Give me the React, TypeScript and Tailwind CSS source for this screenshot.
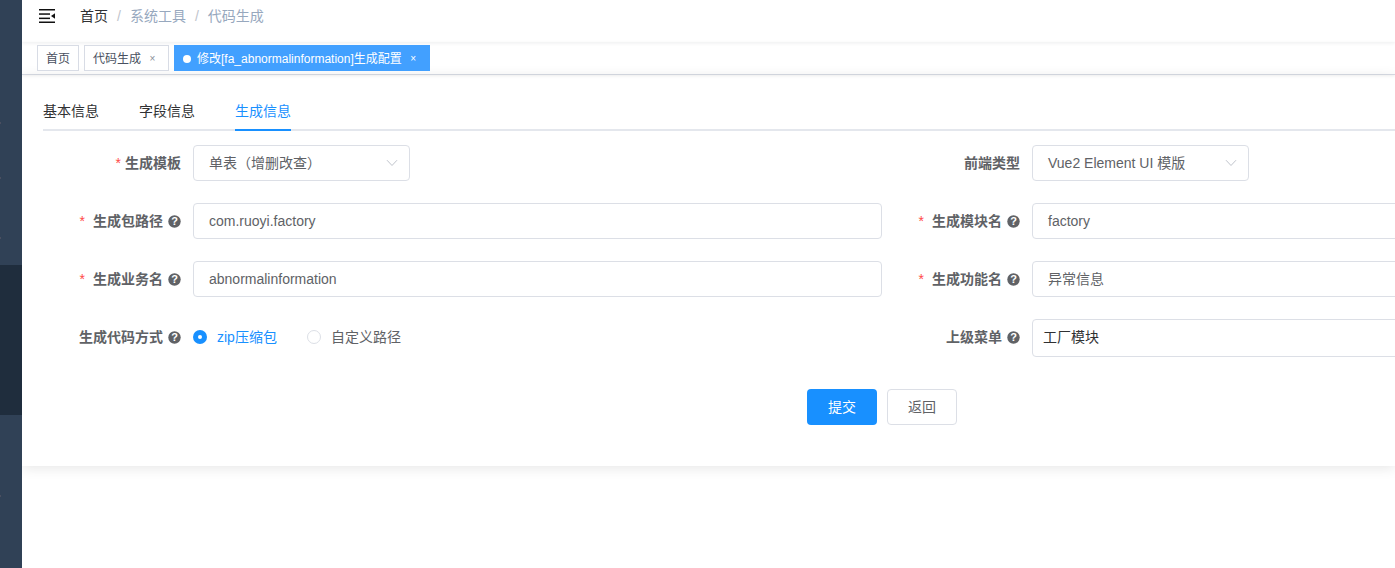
const font = { fontFamily: '"Liberation Sans", "Noto Sans CJK SC", sans-serif' };

function Help() {
  return (
    <svg viewBox="0 0 13 13" className="ml-[5px] h-[13px] w-[13px] shrink-0">
      <circle cx="6.5" cy="6.5" r="6.2" fill="#606266" />
      <text x="6.5" y="10.4" textAnchor="middle" fontSize="11" fontWeight="700" fill="#fff" fontFamily="Liberation Sans">?</text>
    </svg>
  );
}

function Chevron() {
  return (
    <svg viewBox="0 0 12 8" className="h-[8px] w-[12px]" fill="none" stroke="#c0c4cc" strokeWidth="1">
      <path d="M1 1.2l5 5.3 5-5.3" />
    </svg>
  );
}

function Label({ text, req, help, lift }: { text: string; req?: boolean; help?: boolean; lift?: boolean }) {
  return (
    <label className={`flex w-[150px] shrink-0 items-center justify-end pr-3 text-sm font-bold text-[#606266] ${lift ? "pb-[2px]" : ""}`}>
      {req && <span className={`font-normal text-[#ff4949] ${help ? "mr-[8px]" : "mr-[4px]"}`}>*</span>}
      <span>{text}</span>
      {help && <Help />}
    </label>
  );
}

function Input({ value }: { value: string }) {
  return (
    <div className="flex h-9 w-[689px] items-center rounded border border-[#dcdfe6] bg-white px-[15px] text-sm text-[#606266]">
      {value}
    </div>
  );
}

function Select({ value }: { value: string }) {
  return (
    <div className="flex h-9 w-[217px] items-center justify-between rounded border border-[#dcdfe6] bg-white pl-[15px] pr-[11px] text-sm text-[#606266]">
      <span>{value}</span>
      <Chevron />
    </div>
  );
}

function Tag({ text, close }: { text: string; close?: boolean }) {
  return (
    <div className={`flex h-[26px] items-center border border-[#d8dce5] bg-white pl-2 pt-[1px] text-xs text-[#495060] ${close ? "pr-[10px]" : "pr-2"}`}>
      <span>{text}</span>
      {close && <span className="ml-[6px] w-[11px] text-center text-[10px] text-[#8a8f99]">×</span>}
    </div>
  );
}

function Row({ children }: { children: React.ReactNode }) {
  return <div className="flex w-[1678px] items-center">{children}</div>;
}

function Col({ children }: { children: React.ReactNode }) {
  return <div className="flex w-[839px] shrink-0 items-center">{children}</div>;
}

function Radio({ text, checked }: { text: string; checked?: boolean }) {
  return (
    <div className={`flex items-center text-sm ${checked ? "text-[#1890ff]" : "text-[#606266]"}`}>
      {checked ? (
        <span className="flex h-[14px] w-[14px] items-center justify-center rounded-full bg-[#1890ff]">
          <span className="h-1 w-1 rounded-full bg-white" />
        </span>
      ) : (
        <span className="h-[14px] w-[14px] rounded-full border border-[#dcdfe6] bg-white" />
      )}
      <span className="ml-[10px]">{text}</span>
    </div>
  );
}

export default function App() {
  return (
    <div className="flex h-[568px] w-[1395px] overflow-hidden bg-white" style={font}>
      <aside className="relative flex w-[22px] shrink-0 flex-col bg-[#304156]">
        <div className="mt-[265px] h-[150px] bg-[#1f2d3d]" />
        <span className="absolute left-0 top-[122px] h-[2px] w-[1px] bg-[#4a4f60]" />
        <span className="absolute left-0 top-[177px] h-[2px] w-[1px] bg-[#4a4f60]" />
        <span className="absolute left-0 top-[237px] h-[2px] w-[1px] bg-[#4a4f60]" />
        <span className="absolute left-0 top-[495px] h-[2px] w-[1px] bg-[#4a4f60]" />
      </aside>
      <main className="min-w-0 flex-1">
        <header className="flex h-[42px] items-center pb-[11px] shadow-[0_1px_4px_rgba(0,21,41,0.08)]">
          <svg viewBox="0 0 16 14" className="ml-[17px] mt-[1px] h-[14px] w-[16px]" fill="#111">
            <rect x="0" y="0" width="16" height="1.5" />
            <rect x="0" y="4.3" width="11" height="1.5" />
            <rect x="0" y="8.6" width="11" height="1.5" />
            <rect x="0" y="12.5" width="16" height="1.5" />
            <path d="M16 4.2v5.6l-4-2.8z" />
          </svg>
          <nav className="ml-[25px] flex items-center text-sm text-[#97a8be]">
            <span className="text-[#303133]">首页</span>
            <span className="mx-[9px] text-[#c0c4cc]">/</span>
            <span>系统工具</span>
            <span className="mx-[9px] text-[#c0c4cc]">/</span>
            <span>代码生成</span>
          </nav>
        </header>
        <div className="flex h-[33px] items-start gap-[5px] border-b border-[#d8dce5] pl-[15px] pt-[3px] shadow-[0_1px_3px_rgba(0,0,0,0.08)]">
          <Tag text="首页" />
          <Tag text="代码生成" close />
          <div className="flex h-[26px] items-center bg-[#42a0ff] pl-[9px] pr-[11px] pt-[1px] text-xs text-white">
            <span className="mr-[6px] h-2 w-2 rounded-full bg-white" />
            <span>修改[fa_abnormalinformation]生成配置</span>
            <span className="ml-[6px] w-[11px] text-center text-[10px]">×</span>
          </div>
        </div>
        <section className="h-[391px] overflow-hidden px-[21px] shadow-[0_2px_12px_rgba(0,0,0,0.1)]">
          <div className="flex h-[56px] w-[1352px] items-end border-b-2 border-[#e4e7ed] text-sm text-[#303133]">
            <div className="-mb-[2px] flex h-[40px] items-center border-b-2 border-transparent pt-[2px]">基本信息</div>
            <div className="-mb-[2px] ml-10 flex h-[40px] items-center border-b-2 border-transparent pt-[2px]">字段信息</div>
            <div className="-mb-[2px] ml-10 flex h-[40px] items-center border-b-2 border-[#1890ff] pt-[2px] text-[#1890ff]">生成信息</div>
          </div>
          <form className="flex flex-col pt-[14px]">
            <Row>
              <Col>
                <Label text="生成模板" req />
                <Select value="单表（增删改查）" />
              </Col>
              <Col>
                <Label text="前端类型" />
                <Select value="Vue2 Element UI 模版" />
              </Col>
            </Row>
            <div className="mt-[22px]">
              <Row>
                <Col>
                  <Label text="生成包路径" req help />
                  <Input value="com.ruoyi.factory" />
                </Col>
                <Col>
                  <Label text="生成模块名" req help />
                  <Input value="factory" />
                </Col>
              </Row>
            </div>
            <div className="mt-[22px]">
              <Row>
                <Col>
                  <Label text="生成业务名" req help />
                  <Input value="abnormalinformation" />
                </Col>
                <Col>
                  <Label text="生成功能名" req help />
                  <Input value="异常信息" />
                </Col>
              </Row>
            </div>
            <div className="mt-[22px]">
              <Row>
                <Col>
                  <Label text="生成代码方式" help lift />
                  <div className="flex items-center gap-[30px] pb-[2px]">
                    <Radio text="zip压缩包" checked />
                    <Radio text="自定义路径" />
                  </div>
                </Col>
                <Col>
                  <Label text="上级菜单" help lift />
                  <div className="flex h-[38px] w-[689px] items-center rounded border border-[#dcdfe6] bg-white px-[10px] pb-[2px] text-sm text-[#303133]">工厂模块</div>
                </Col>
              </Row>
            </div>
            <div className="mt-[32px] flex w-[1678px] justify-center gap-[10px]">
              <button type="button" className="h-9 w-[70px] rounded bg-[#1890ff] text-sm text-white">提交</button>
              <button type="button" className="h-9 w-[70px] rounded border border-[#dcdfe6] bg-white text-sm text-[#606266]">返回</button>
            </div>
          </form>
        </section>
      </main>
    </div>
  );
}
